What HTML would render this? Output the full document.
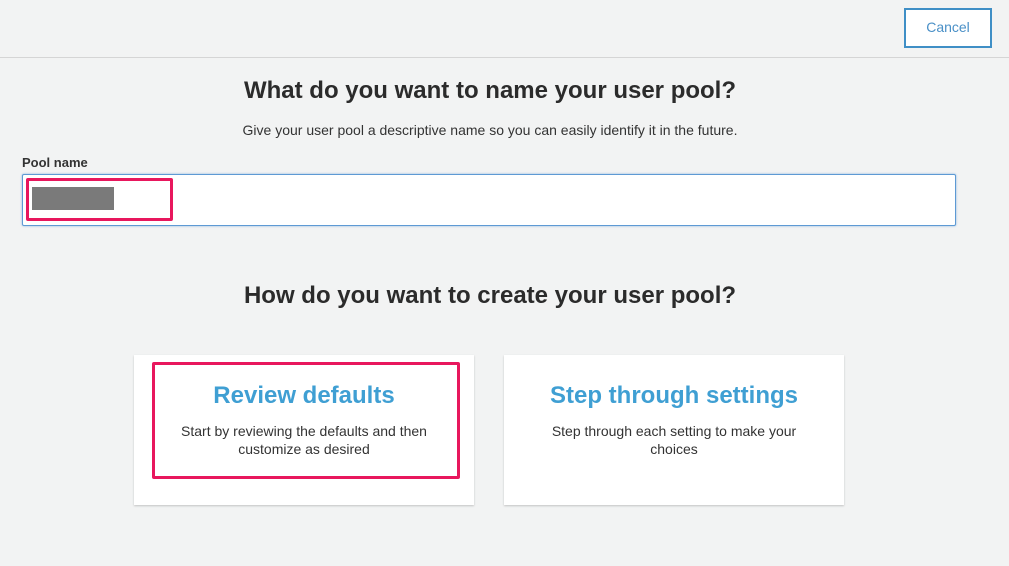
<!DOCTYPE html><html><head><style>
body{margin:0;width:1009px;height:566px;background:#f2f3f3;font-family:"Liberation Sans",sans-serif;position:relative;overflow:hidden;color:#333}
.top{position:absolute;left:0;top:0;width:1009px;height:57px;border-bottom:1px solid #d5d5d5}
.cancel{position:absolute;left:904px;top:8px;width:84px;height:36px;border:2px solid #3f8fc6;background:#fff;color:#4a90c7;font-size:14px;text-align:center;line-height:34px}
h1{position:absolute;margin:0;width:980px;text-align:center;font-size:24px;font-weight:bold;color:#2b2b2b}
.sub{position:absolute;top:122px;width:980px;text-align:center;font-size:14px;color:#333}
.lbl{position:absolute;left:22px;top:155px;font-size:13px;font-weight:bold;color:#333}
.inp{position:absolute;left:22px;top:174px;width:932px;height:50px;background:#fff;border:1px solid #5e9ad4;border-radius:2px;box-shadow:0 0 2px #8ab4e0}
.card{position:absolute;top:355px;width:340px;height:150px;background:#fff;box-shadow:0 1px 2px rgba(0,0,0,.2);text-align:center}
.card b{display:block;margin-top:27px;font-size:24px;color:#3f9fd3}
.card p{margin:12px auto 0;width:270px;font-size:14px;line-height:18px;color:#333}
.red{position:absolute;border:3px solid #e8175d;border-radius:2px}
</style></head><body>
<div class="top"><div class="cancel">Cancel</div></div>
<h1 style="top:77px">What do you want to name your user pool?</h1>
<div class="sub">Give your user pool a descriptive name so you can easily identify it in the future.</div>
<div class="lbl">Pool name</div>
<div class="inp"></div>
<div style="position:absolute;left:32px;top:187px;width:82px;height:23px;background:#7a7a7a"></div>
<div class="red" style="left:26px;top:178px;width:141px;height:37px"></div>
<h1 style="top:282px">How do you want to create your user pool?</h1>
<div class="card" style="left:134px"><b>Review defaults</b><p>Start by reviewing the defaults and then customize as desired</p></div>
<div class="card" style="left:504px"><b>Step through settings</b><p>Step through each setting to make your choices</p></div>
<div class="red" style="left:152px;top:362px;width:302px;height:111px"></div>
</body></html>
